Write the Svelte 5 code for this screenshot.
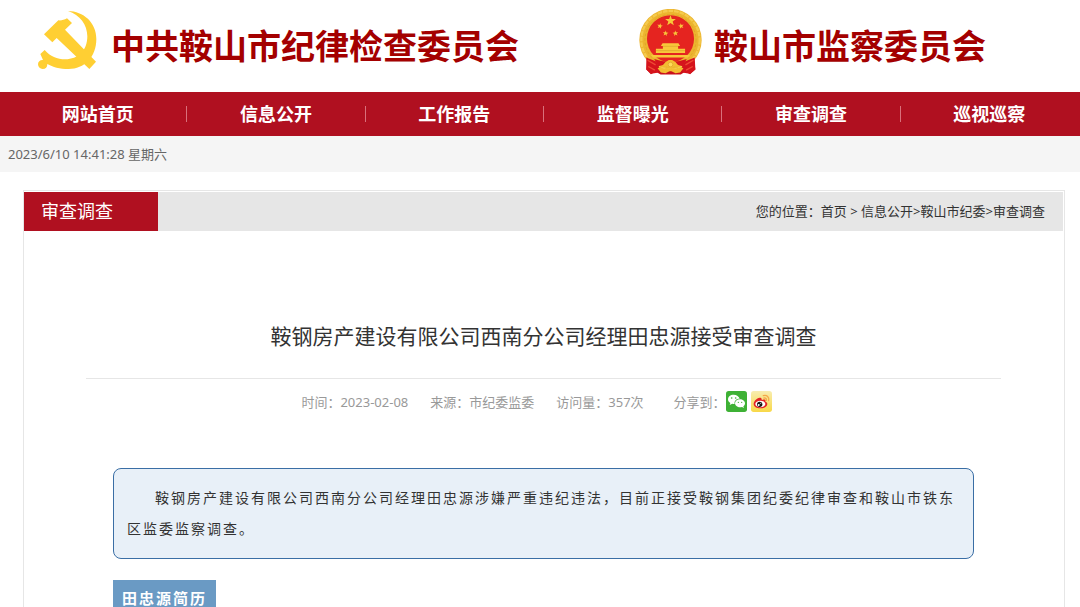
<script>
  const nav = ['网站首页', '信息公开', '工作报告', '监督曝光', '审查调查', '巡视巡察'];
  const star = (cx, cy, r, turn = 0) =>
    Array.from({ length: 10 }, (_, i) => {
      const a = ((i * 36 - 90 + turn) * Math.PI) / 180;
      const d = i % 2 ? r * 0.4 : r;
      return `${(cx + d * Math.cos(a)).toFixed(1)},${(cy + d * Math.sin(a)).toFixed(1)}`;
    }).join(' ');
</script>

<div class="page">
  <header>
    <div class="brand party">
      <svg width="59" height="60" viewBox="54 29 177 180" aria-hidden="true">
        <g fill="#ffcf33">
          <path d="M144 32C190 33 229 66 229 116C229 170 193 206 146 206C119 206 98 200 82 191C82 201 77 206 68 206C60 206 54 200 54 192C54 183 61 178 69 179L61 161L74 149C91 168 111 177 136 177C174 177 202 151 202 108C202 74 180 43 144 32Z" />
          <path d="M72 102L115 60C124 61 132 59 141 54L156 68L135 88L228 184L208 206L110 113L97 126Z" />
        </g>
      </svg>
      <h1>中共鞍山市纪律检查委员会</h1>
    </div>
    <div class="brand">
      <svg width="63" height="66" viewBox="12 12 190 198" aria-hidden="true">
        <path d="M38 150L34 194L48 208L62 200L77 209H138L152 200L166 208L182 194L176 150Z" fill="#c9101a" />
        <circle cx="107" cy="105" r="94" fill="#ecb52f" />
        <circle cx="107" cy="105" r="88" fill="none" stroke="#f5ca4c" stroke-width="7" stroke-dasharray="14 3" />
        <circle cx="107" cy="105" r="77" fill="none" stroke="#dfa428" stroke-width="3" stroke-dasharray="8 6" />
        <circle cx="107" cy="101" r="71" fill="#e52420" />
        <g fill="#f8c83a">
          <polygon points={star(107, 47, 17)} />
          <polygon points={star(75, 63, 9, 12)} />
          <polygon points={star(139, 63, 9, -12)} />
          <polygon points={star(92, 85, 9, 6)} />
          <polygon points={star(122, 85, 9, -6)} />
          <path d="M83 115H131L136 123H130V131H151V144H63V131H84V123H78Z" />
          <path d="M48 150H166L160 158H54Z" />
        </g>
        <path d="M63 137H151M84 124H130" stroke="#dba22a" stroke-width="2" />
        <path d="M34 158L64 170L76 193L68 204L48 207L34 194Z M180 158L150 170L138 193L146 204L166 207L182 194Z" fill="#d5131c" />
        <path d="M38 166L62 180M40 185L60 196M176 166L152 180M174 185L154 196" stroke="#f04a35" stroke-width="4" />
        <path d="M58 162Q107 180 156 162L144 184L107 174L70 184Z" fill="#d5131c" />
        <path d="M92 171L102 165H112L122 171L134 186L118 184L107 190L96 184L80 186Z" fill="#f3bd32" />
        <path d="M68 190Q78 184 88 193L98 190H116L126 193Q136 184 146 190L136 203L122 205L107 198L92 205L78 203Z" fill="#f3bd32" />
        <circle cx="107" cy="179" r="7" fill="#ffda59" stroke="#dba22a" stroke-width="2" />
      </svg>
      <h1>鞍山市监察委员会</h1>
    </div>
  </header>

  <nav>
    {#each nav as item}
      <a href="#top">{item}</a>
    {/each}
  </nav>
  <div class="clock">2023/6/10 14:41:28 星期六</div>

  <main>
    <div class="bar">
      <h2>审查调查</h2>
      <div class="crumbs">您的位置：<a href="#home">首页</a> &gt; <a href="#info">信息公开</a>&gt;<a href="#org">鞍山市纪委</a>&gt;<a href="#review">审查调查</a></div>
    </div>
    <article>
      <h3>鞍钢房产建设有限公司西南分公司经理田忠源接受审查调查</h3>
      <div class="meta">
        <span>时间：2023-02-08</span>
        <span>来源：市纪委监委</span>
        <span>访问量：357次</span>
        <div class="share">
          <span>分享到：</span>
          <button aria-label="微信">
            <svg width="21" height="21" viewBox="0 0 63 63">
              <rect width="63" height="63" rx="8" fill="#3eb135" />
              <path d="M23 11C13 11 6 17 6 25C6 30 9 34 13 36L11 42L19 38Q22 39 26 39C24 29 31 23 41 23C39 16 32 11 23 11Z" fill="#fff" />
              <path d="M42 25C33 25 27 31 27 37C27 44 34 49 42 49Q45 49 48 48L54 51L52 46C55 44 57 41 57 37C57 31 50 25 42 25Z" fill="#fff" />
              <g fill="#3eb135"><circle cx="17" cy="21" r="2.5" /><circle cx="29" cy="21" r="2.5" /><circle cx="37" cy="34" r="2" /><circle cx="47" cy="34" r="2" /></g>
            </svg>
          </button>
          <button aria-label="微博">
            <svg width="21" height="21" viewBox="0 0 63 63">
              <defs>
                <linearGradient id="wb" x1="0" y1="0" x2="0" y2="1"><stop offset="0" stop-color="#f8edb0" /><stop offset="1" stop-color="#f8d848" /></linearGradient>
              </defs>
              <rect width="63" height="63" rx="8" fill="url(#wb)" />
              <path d="M26 20C17 21 8 31 8 39C8 47 17 52 28 52C40 52 49 46 49 39C49 35 46 33 43 32C45 27 42 23 32 27C33 23 31 20 26 20Z" fill="#e32226" />
              <ellipse cx="28" cy="39" rx="15" ry="10" fill="#fff" />
              <circle cx="26" cy="40" r="8" fill="#151515" />
              <circle cx="23" cy="42" r="3" fill="#fff" /><circle cx="29" cy="37" r="1.5" fill="#fff" />
              <path d="M37 14C47 10 56 19 53 29M39 21C44 20 47 24 46 28" fill="none" stroke="#f5a84a" stroke-width="4" stroke-linecap="round" />
            </svg>
          </button>
        </div>
      </div>
      <div class="content">
        <p class="notice">鞍钢房产建设有限公司西南分公司经理田忠源涉嫌严重违纪违法，目前正接受鞍钢集团纪委纪律审查和鞍山市铁东区监委监察调查。</p>
        <h4>田忠源简历</h4>
      </div>
    </article>
  </main>
</div>

<style>
  :global(body) {
    margin: 0;
    background: #fff;
    overflow: hidden;
  }
  .page {
    font-family: 'Noto Sans', 'Noto Sans CJK SC', sans-serif;
    color: #333;
  }
  h1, h2, h3, h4, p { margin: 0; }
  a { color: inherit; text-decoration: none; }
  header {
    display: flex;
    height: 92px;
    padding-left: 38px;
    box-sizing: border-box;
  }
  .brand {
    display: flex;
    align-items: center;
    gap: 12px;
    padding-bottom: 8px;
  }
  .party {
    flex: 0 0 601px;
    gap: 14px;
    padding-bottom: 12px;
  }
  h1 {
    font-size: 34px;
    line-height: 48px;
    font-weight: 700;
    color: #a40000;
    white-space: nowrap;
    padding-top: 8px;
  }
  .party h1 { padding-top: 12px; }
  nav {
    display: grid;
    grid-template-columns: repeat(6, 1fr);
    padding: 0 1px 0 9px;
    background: #b01020;
    height: 44px;
    align-items: center;
  }
  nav a {
    color: #fff;
    font-size: 18px;
    line-height: 16px;
    font-weight: 700;
    text-align: center;
    border-right: 1px solid #d9707b;
  }
  nav a:last-child { border-right-color: transparent; }
  .clock {
    background: #f5f5f5;
    padding: 0 8px;
    font-size: 13px;
    line-height: 36px;
    color: #666;
  }
  main {
    margin: 18px 15px 0 23px;
    border: 1px solid #e6e6e6;
    padding-top: 1px;
  }
  .bar {
    display: flex;
    justify-content: space-between;
    margin-right: 1px;
    background: #e6e6e6;
    line-height: 39px;
  }
  h2 {
    width: 117px;
    padding-left: 17px;
    background: #b01020;
    color: #fff;
    font-size: 18px;
    font-weight: 400;
  }
  .crumbs {
    padding-right: 18px;
    font-size: 13px;
  }
  article { padding: 84px 63px 0 62px; }
  h3 {
    font-size: 21px;
    line-height: 42px;
    font-weight: 400;
    text-align: center;
    padding-bottom: 21px;
    border-bottom: 1px solid #e6e6e6;
  }
  .meta {
    display: flex;
    justify-content: center;
    align-items: center;
    gap: 22px;
    height: 44px;
    padding-right: 14px;
    font-size: 13px;
    color: #999;
  }
  .share {
    display: flex;
    align-items: center;
    margin-left: 8px;
  }
  button {
    display: block;
    padding: 0;
    border: 0;
    background: none;
    height: 21px;
  }
  button + button { margin-left: 4px; }
  .content { padding: 45px 27px 0 27px; }
  .notice {
    border: 1px solid #3a6ea5;
    border-radius: 8px;
    background: #e8f0f8;
    padding: 13px 13px 14px;
    font-size: 14px;
    line-height: 31px;
    letter-spacing: 2px;
    text-indent: 28px;
  }
  h4 {
    display: inline-block;
    margin-top: 21px;
    padding: 0 9px;
    background: #6a9ac4;
    color: #fff;
    font-size: 15px;
    line-height: 36px;
    letter-spacing: 2px;
  }
</style>
